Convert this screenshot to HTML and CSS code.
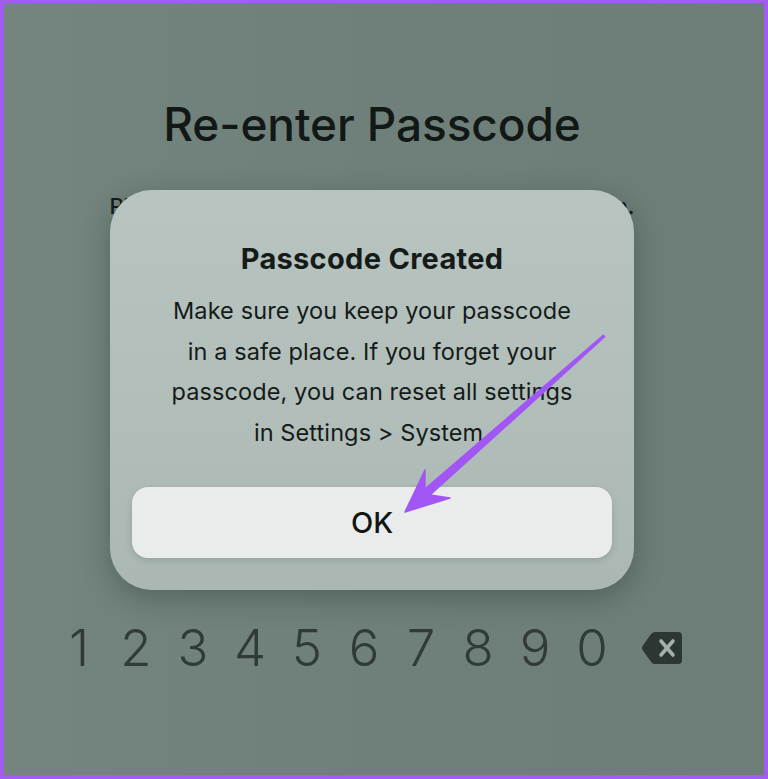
FILE: index.html
```html
<!DOCTYPE html>
<html lang="en">
<head>
<meta charset="utf-8">
<title>Re-enter Passcode</title>
<link rel="stylesheet" href="styles.css">
</head>
<body>
<div class="screen">
  <h1 class="title">Re-enter Passcode</h1>
  <p class="subtitle">Please enter the same passcode again to confirm.</p>
  <div class="keypad">
    <span class="key">1</span>
    <span class="key">2</span>
    <span class="key">3</span>
    <span class="key">4</span>
    <span class="key">5</span>
    <span class="key">6</span>
    <span class="key">7</span>
    <span class="key">8</span>
    <span class="key">9</span>
    <span class="key">0</span>
    <span class="key key-del">
      <svg width="42" height="36" viewBox="0 0 42 36" aria-hidden="true">
        <path d="M14 2 H37 Q41 2 41 6 V30 Q41 34 37 34 H14 Q12 34 10.5 32.5 L1.5 20 Q0.5 18 1.5 16 L10.5 3.5 Q12 2 14 2 Z" fill="#2c3633"/>
        <path d="M20 11 L32 25 M32 11 L20 25" stroke="#a3b0ab" stroke-width="3.6" stroke-linecap="round"/>
      </svg>
    </span>
  </div>

  <div class="dialog">
    <h2 class="dialog-title">Passcode Created</h2>
    <p class="dialog-text">Make sure you keep your passcode<br>in a safe place. If you forget your<br>passcode, you can reset all settings<br>in Settings &gt; System.</p>
    <div class="dialog-button">OK</div>
  </div>

  <svg class="arrow" width="768" height="779" viewBox="0 0 768 779" aria-hidden="true">
    <polygon points="604.7,336.7 430.1,495 450,498 405,512 425,470 424.9,489 603.3,335.3" fill="#a156f5" stroke="#a156f5" stroke-width="1.5" stroke-linejoin="round"/>
  </svg>
</div>
</body>
</html>
```

FILE: styles.css
```css
html, body {
  margin: 0;
  padding: 0;
}

body {
  width: 768px;
  height: 779px;
  overflow: hidden;
  font-family: "Inter", "Roboto", "DejaVu Sans", sans-serif;
}

.screen {
  position: relative;
  box-sizing: border-box;
  width: 768px;
  height: 779px;
  border: 4px solid #a35bf2;
  border-top-width: 3px;
  padding-right: 24px;
  background: linear-gradient(90deg, #74847e 0%, #6f7f79 50%, #6d7d77 100%);
  display: flex;
  flex-direction: column;
  align-items: center;
}

.title {
  margin: 93px 0 0;
  font-size: 46px;
  line-height: 56px;
  font-weight: 500;
  color: #121816;
  letter-spacing: -0.1px;
}

.subtitle {
  margin: 39px 0 0;
  font-size: 22px;
  line-height: 30px;
  font-weight: 500;
  color: #141a18;
}

.keypad {
  display: flex;
  align-items: center;
  margin-top: 397px;
  margin-left: -11px;
}

.key {
  width: 57px;
  text-align: center;
  font-size: 51px;
  line-height: 60px;
  font-weight: 300;
  color: #303b37;
}

.key-del {
  width: 42px;
  margin-left: 20px;
  display: flex;
  align-items: center;
  justify-content: center;
}

.dialog {
  position: absolute;
  left: 106px;
  top: 187px;
  box-sizing: border-box;
  width: 524px;
  height: 400px;
  border-radius: 42px;
  background: linear-gradient(180deg, #b8c4c0 0%, #b1bdb9 60%, #aab7b2 100%);
  box-shadow: 0 8px 28px rgba(30, 45, 40, 0.35);
  display: flex;
  flex-direction: column;
  align-items: center;
  padding: 51px 10px 0;
}

.dialog-title {
  margin: 0;
  font-size: 29px;
  line-height: 36px;
  font-weight: 700;
  color: #151b19;
  letter-spacing: 0.3px;
}

.dialog-text {
  margin: 14px 0 0;
  font-size: 23.5px;
  line-height: 40.5px;
  font-weight: 400;
  color: #151b19;
  text-align: center;
  letter-spacing: 0.1px;
}

.dialog-button {
  margin-top: 34px;
  width: 480px;
  height: 71px;
  border-radius: 16px;
  background: #e9eceb;
  box-shadow: 0 2px 6px rgba(40, 55, 50, 0.18);
  display: flex;
  align-items: center;
  justify-content: center;
  font-size: 29px;
  font-weight: 500;
  color: #111614;
}

.arrow {
  position: absolute;
  left: -4px;
  top: -3px;
  pointer-events: none;
}
```
